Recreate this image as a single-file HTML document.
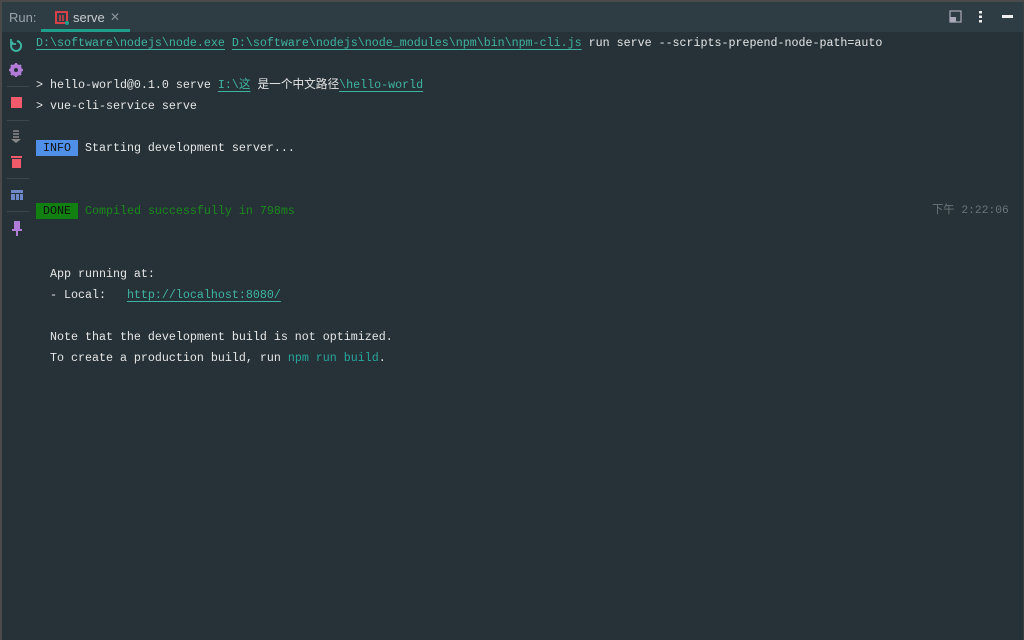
<!DOCTYPE html>
<html><head><meta charset="utf-8"><style>
*{margin:0;padding:0;box-sizing:border-box}
html,body{width:1024px;height:640px;overflow:hidden;background:#263238}
.frame{position:absolute;left:0;top:0;width:1024px;height:640px;border-left:2px solid #4a4a4a;border-top:2px solid #4a4a4a;border-right:1px solid #3a3f41;background:#263238}
.hdr{position:absolute;left:0;top:0;right:0;height:30px;background:#2e3c43}
.run{position:absolute;left:7px;top:8px;font:13px "Liberation Sans",sans-serif;color:#9aa4a8}
.tab{position:absolute;left:39px;top:0;width:89px;height:30px;border-bottom:3px solid #1f9e8c}
.tab .t{position:absolute;left:32px;top:8px;font:13px "Liberation Sans",sans-serif;color:#c8cdcf}
.tab .x{position:absolute;left:69px;top:8px;font:12px "Liberation Sans",sans-serif;color:#8a9499}
.side{position:absolute;left:0;top:30px;width:28px}
.con{position:absolute;left:34px;top:31px;font-family:"Liberation Mono","Noto Sans CJK SC",monospace;font-size:11.67px;color:#e6e6e6;white-space:pre}
.l{position:absolute;left:0;height:21px;line-height:21px}
.u{color:#3fb3a1;text-decoration:underline;text-underline-offset:3px}
.g{color:#1a8a1a}
.c{color:#26a69a}
.tag{display:inline-block;padding:0 7px;color:#111;line-height:16px}
</style></head><body><div class="frame">
<div class="hdr">
<div class="run">Run:</div>
<div class="tab">
<svg style="position:absolute;left:14px;top:9px" width="14" height="14"><rect x="1" y="1" width="11" height="11" fill="none" stroke="#d9414a" stroke-width="2"/><path d="M5 4v6M8 4v6" stroke="#d9414a" stroke-width="1.5"/><circle cx="12" cy="12" r="2" fill="#1f9e8c"/></svg>
<span class="t">serve</span><span class="x">✕</span></div>
<svg style="position:absolute;left:947px;top:8px" width="14" height="14"><rect x="1" y="1" width="11" height="11" fill="none" stroke="#aab" stroke-width="1.2"/><rect x="1" y="7" width="6" height="5" fill="#aab"/></svg>
<svg style="position:absolute;left:976px;top:8px" width="6" height="14"><rect x="1" y="1" width="3" height="2.5" fill="#eee"/><rect x="1" y="5.5" width="3" height="2.5" fill="#eee"/><rect x="1" y="10" width="3" height="2.5" fill="#eee"/></svg>
<div style="position:absolute;left:1000px;top:13px;width:11px;height:3px;background:#eee"></div>
</div>
<div class="side">
<svg style="position:absolute;left:7px;top:6px" width="14" height="14"><path d="M4 4A5 5 0 1 0 8 3" fill="none" stroke="#3fb3a1" stroke-width="2"/><path d="M2 1v5h5" fill="none" stroke="#3fb3a1" stroke-width="1.8"/></svg>
<svg style="position:absolute;left:7px;top:31px" width="14" height="14"><circle cx="7" cy="7" r="4.5" fill="none" stroke="#b07cd8" stroke-width="3"/><path d="M7 0v14M0 7h14M2 2l10 10M12 2L2 12" stroke="#b07cd8" stroke-width="2.2"/><circle cx="7" cy="7" r="2" fill="#263238"/></svg>
<div style="position:absolute;left:5px;top:54px;width:22px;height:1px;background:#3a474d"></div>
<div style="position:absolute;left:9px;top:65px;width:11px;height:11px;background:#f05a6b"></div>
<div style="position:absolute;left:5px;top:88px;width:22px;height:1px;background:#3a474d"></div>
<svg style="position:absolute;left:9px;top:98px" width="12" height="14"><path d="M2 1h6M2 4h6M2 7h6" stroke="#888" stroke-width="1.5"/><path d="M0 9h10l-5 4z" fill="#888"/></svg>
<svg style="position:absolute;left:9px;top:123px" width="12" height="14"><rect x="0" y="1" width="11" height="2" fill="#f05a6b"/><rect x="1" y="4" width="9" height="9" fill="#f05a6b"/></svg>
<div style="position:absolute;left:5px;top:146px;width:22px;height:1px;background:#3a474d"></div>
<svg style="position:absolute;left:9px;top:157px" width="14" height="12"><rect x="0" y="1" width="12" height="3" fill="#6d87c8"/><rect x="0" y="5" width="4" height="6" fill="#6d87c8"/><rect x="5" y="5" width="3" height="6" fill="#6d87c8"/><rect x="9" y="5" width="3" height="6" fill="#6d87c8"/></svg>
<div style="position:absolute;left:5px;top:179px;width:22px;height:1px;background:#3a474d"></div>
<svg style="position:absolute;left:10px;top:189px" width="10" height="16"><rect x="2" y="0" width="6" height="8" fill="#b07cd8"/><rect x="0" y="8" width="10" height="2" fill="#b07cd8"/><rect x="4" y="10" width="2" height="5" fill="#b07cd8"/></svg>
</div>
<div class="con">
<div class="l" style="top:0"><span class="u">D:\software\nodejs\node.exe</span> <span class="u">D:\software\nodejs\node_modules\npm\bin\npm-cli.js</span> run serve --scripts-prepend-node-path=auto</div>
<div class="l" style="top:42px">&gt; hello-world@0.1.0 serve <span class="u">I:\这</span> 是一个中文路径<span class="u">\hello-world</span></div>
<div class="l" style="top:63px">&gt; vue-cli-service serve</div>
<div class="l" style="top:105px"><span class="tag" style="background:#4f8fe8">INFO</span> Starting development server...</div>
<div class="l" style="top:168px"><span class="tag" style="background:#118011">DONE</span> <span class="g">Compiled successfully in 798ms</span></div>
<div class="l" style="top:168px;left:896px;color:#6b7478;font-size:11.3px">下午 2:22:06</div>
<div class="l" style="top:231px">  App running at:</div>
<div class="l" style="top:252px">  - Local:   <span class="u">http://localhost:8080/</span></div>
<div class="l" style="top:294px">  Note that the development build is not optimized.</div>
<div class="l" style="top:315px">  To create a production build, run <span class="c">npm run build</span>.</div>
</div>
</div></body></html>
